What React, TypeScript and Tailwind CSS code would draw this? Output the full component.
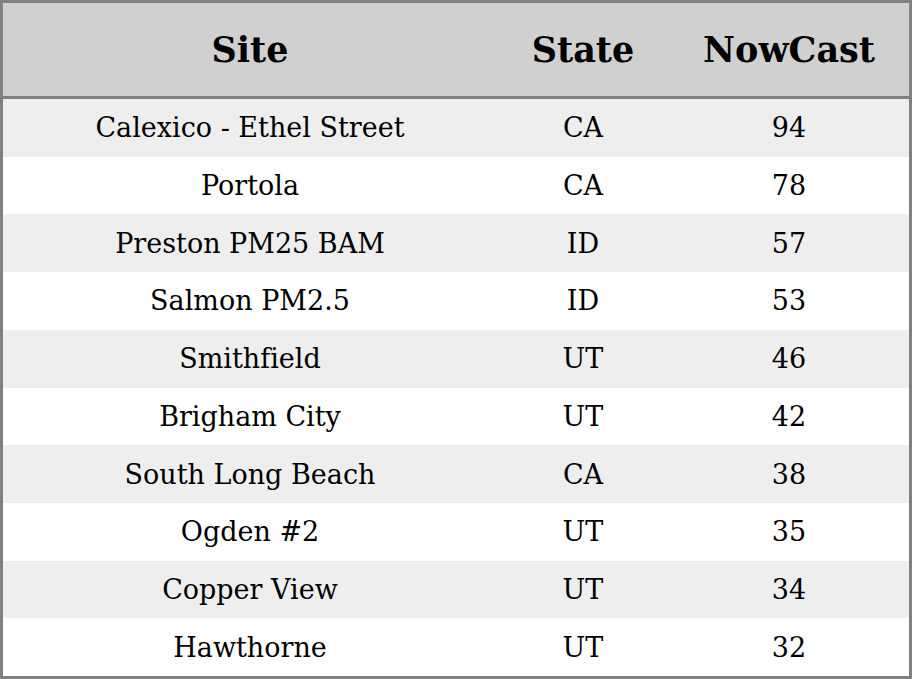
import React from 'react';

const rows = [
  { site: 'Calexico - Ethel Street', state: 'CA', nowcast: 94 },
  { site: 'Portola', state: 'CA', nowcast: 78 },
  { site: 'Preston PM25 BAM', state: 'ID', nowcast: 57 },
  { site: 'Salmon PM2.5', state: 'ID', nowcast: 53 },
  { site: 'Smithfield', state: 'UT', nowcast: 46 },
  { site: 'Brigham City', state: 'UT', nowcast: 42 },
  { site: 'South Long Beach', state: 'CA', nowcast: 38 },
  { site: 'Ogden #2', state: 'UT', nowcast: 35 },
  { site: 'Copper View', state: 'UT', nowcast: 34 },
  { site: 'Hawthorne', state: 'UT', nowcast: 32 },
];

const App = () => {
  return (
    <div className="w-[912px] h-[679px] bg-white font-['DejaVu_Serif',serif] text-black [font-variant-ligatures:none]">
      <div className="w-full h-full border-[3px] border-[#808080] flex flex-col">
        {/* Header */}
        <div className="grid grid-cols-[494px_172px_1fr] h-[96px] bg-[#d0d0d0] border-b-[3px] border-[#808080] shrink-0 items-center text-[35px] leading-none font-bold">
          <div className="text-center">Site</div>
          <div className="text-center">State</div>
          <div className="text-center">NowCast</div>
        </div>

        {/* Body */}
        <div className="flex-1 grid grid-rows-10">
          {rows.map((r, i) => (
            <div
              key={r.site}
              className={`grid grid-cols-[494px_172px_1fr] items-center text-[27px] leading-none ${i % 2 === 0 ? 'bg-[#eeeeee]' : 'bg-white'}`}
            >
              <div className="text-center">{r.site}</div>
              <div className="text-center">{r.state}</div>
              <div className="text-center">{r.nowcast}</div>
            </div>
          ))}
        </div>
      </div>
    </div>
  );
};

export default App;
